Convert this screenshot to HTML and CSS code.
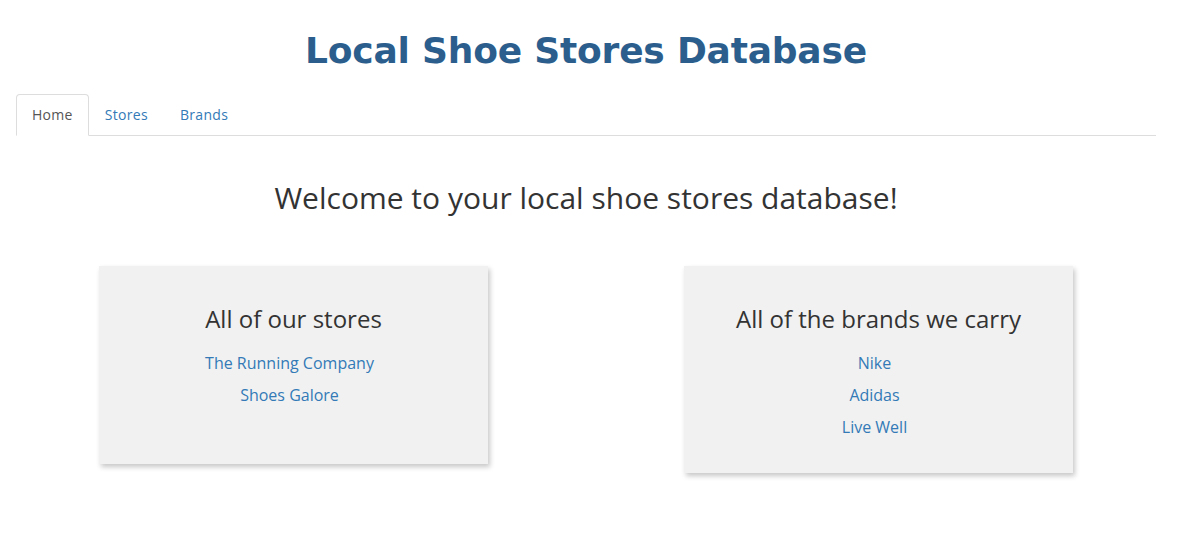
FILE: index.html
```html
<!DOCTYPE html>
<html>
<head>
<meta charset="utf-8">
<title>Local Shoe Stores Database</title>
<link rel="stylesheet" href="styles.css">
</head>
<body>
<div class="container">
  <h1 class="site-title">Local Shoe Stores Database</h1>
  <ul class="tabs">
    <li class="tab active"><a href="#">Home</a></li>
    <li class="tab"><a href="#">Stores</a></li>
    <li class="tab"><a href="#">Brands</a></li>
  </ul>
  <h2 class="welcome">Welcome to your local shoe stores database!</h2>
  <div class="row">
    <div class="col">
      <div class="card">
        <h3 class="card-title">All of our stores</h3>
        <ul class="links">
          <li><a href="#">The Running Company</a></li>
          <li><a href="#">Shoes Galore</a></li>
        </ul>
      </div>
    </div>
    <div class="col">
      <div class="card">
        <h3 class="card-title">All of the brands we carry</h3>
        <ul class="links">
          <li><a href="#">Nike</a></li>
          <li><a href="#">Adidas</a></li>
          <li><a href="#">Live Well</a></li>
        </ul>
      </div>
    </div>
  </div>
</div>
</body>
</html>
```
FILE: styles.css
```css
* { box-sizing: border-box; }
html, body { margin: 0; padding: 0; background: #fff; }
body {
  font-family: "Open Sans", "Liberation Sans", sans-serif;
  font-size: 14px;
  color: #333;
}
a { color: #337ab7; text-decoration: none; }
.container {
  width: 1140px;
  margin-left: 16px;
  padding-bottom: 60px;
}
.site-title {
  margin: 0;
  padding-top: 31px;
  height: 94px;
  text-align: center;
  font-family: "DejaVu Sans", Verdana, sans-serif;
  font-weight: bold;
  font-size: 36px;
  letter-spacing: -0.2px;
  line-height: 40px;
  color: #2b5e8d;
}
.tabs {
  list-style: none;
  margin: 0;
  padding: 0;
  display: flex;
  border-bottom: 1px solid #ddd;
}
.tab { margin-bottom: -1px; }
.tab a {
  display: block;
  padding: 10px 15px;
  line-height: 20px;
  letter-spacing: 0.3px;
  border: 1px solid transparent;
  border-radius: 4px 4px 0 0;
}
.tab.active a {
  color: #555;
  background: #fff;
  border-color: #ddd #ddd transparent;
}
.welcome {
  margin: 38px 0 0;
  text-align: center;
  font-weight: normal;
  font-size: 30px;
  line-height: 48px;
}
.row {
  display: flex;
  margin: 44px -15px 0;
}
.col {
  flex: 1;
  padding: 0 15px;
  display: flex;
  justify-content: center;
  align-items: flex-start;
}
.card {
  width: 70%;
  min-height: 198px;
  background: #f1f1f1;
  box-shadow: 2px 3px 5px rgba(0,0,0,0.22);
  text-align: center;
  padding: 39px 20px 30px;
}
.card-title {
  margin: 0;
  font-weight: normal;
  font-size: 24px;
  line-height: 28px;
}
.links {
  list-style: none;
  margin: 14px 0 0;
  padding: 0 8px 0 0;
  font-size: 16px;
  line-height: 32px;
}
```
